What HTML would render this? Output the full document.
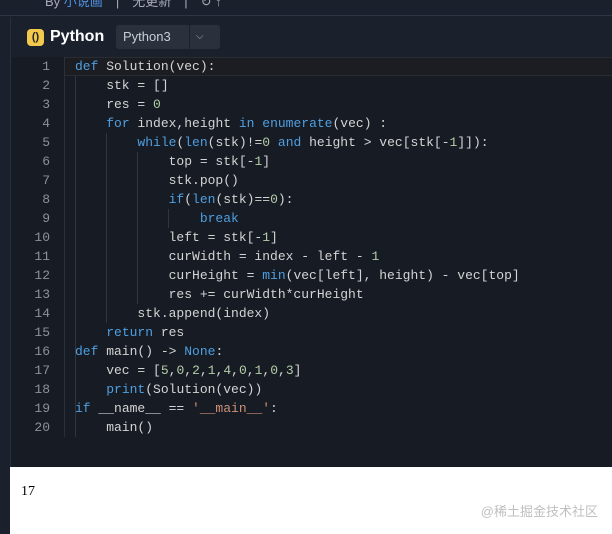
<!DOCTYPE html>
<html><head><meta charset="utf-8"><style>
*{margin:0;padding:0;box-sizing:border-box}
body{width:612px;height:534px;background:#1b212c;position:relative;overflow:hidden;font-family:"Liberation Sans","Noto Sans CJK SC",sans-serif}
.top{position:absolute;left:0;top:0;width:612px;height:16px;border-bottom:1px solid #2e3542}
.top span{position:absolute;top:-9px;font-size:13px;color:#aab}
.hdr{position:absolute;left:10px;top:17px;width:602px;height:40px;border-left:1px solid #2a303b}
.logo{position:absolute;left:16px;top:12px;width:17px;height:17px;background:#f2c94c;border-radius:4px;color:#222;font-size:11px;font-weight:bold;text-align:center;line-height:17px}
.title{position:absolute;left:39px;top:11px;color:#fff;font-weight:bold;font-size:16px}
.sel{position:absolute;left:105px;top:8px;width:104px;height:24px;background:#2b313c;border-radius:3px;color:#c9ced6;font-size:13px;line-height:24px;padding-left:7px}
.sel i{position:absolute;left:73px;top:0;width:1px;height:24px;background:#1b212c}
.code{position:absolute;left:10px;top:57px;width:602px;height:410px;background:#161b24;border-left:1px solid #2a303b}
.cur{position:absolute;left:54px;top:0;width:548px;height:19px;background:#1b1d22;border-top:1px solid #2a2c30;border-bottom:1px solid #2a2c30}
.gut{position:absolute;left:53px;top:0;width:1px;height:380px;background:#2a303b}
.ln{position:absolute;left:0;width:39px;text-align:right;color:#8b929c;font:13px/19px "Liberation Mono",monospace}
.l{position:absolute;left:64px;white-space:pre;color:#d4d4d4;font:13px/19px "Liberation Mono",monospace}
.k{color:#4f9fe0}.n{color:#b5cea8}.s{color:#ce9178}
.g{position:absolute;width:1px;background:#2f3541}
.out{position:absolute;left:10px;top:467px;width:602px;height:67px;background:#fff}
.out .r{position:absolute;left:11px;top:17px;font:14px "Liberation Serif",serif;color:#000}
.wm{position:absolute;right:14px;top:34px;font-size:13px;color:#bfbfbf}
</style></head><body>
<div class="top"><span style="left:45px">By <span style="position:static;color:#4f8fe0">小说画</span>　|　无更新　|　↻ ↑</span></div>
<div class="hdr"><div class="logo">()</div><div class="title">Python</div><div class="sel">Python3<i></i><span style="position:absolute;left:80px;top:0;color:#aab;font-size:10px">⌵</span></div></div>
<div class="code">
<div class="cur"></div><div class="gut"></div>
<div class="g" style="left:64px;top:19px;height:361px"></div>
<div class="g" style="left:95px;top:76px;height:190px"></div>
<div class="g" style="left:126px;top:95px;height:152px"></div>
<div class="g" style="left:157px;top:152px;height:19px"></div>
<div class="ln" style="top:0">1</div><div class="ln" style="top:19px">2</div><div class="ln" style="top:38px">3</div><div class="ln" style="top:57px">4</div><div class="ln" style="top:76px">5</div><div class="ln" style="top:95px">6</div><div class="ln" style="top:114px">7</div><div class="ln" style="top:133px">8</div><div class="ln" style="top:152px">9</div><div class="ln" style="top:171px">10</div><div class="ln" style="top:190px">11</div><div class="ln" style="top:209px">12</div><div class="ln" style="top:228px">13</div><div class="ln" style="top:247px">14</div><div class="ln" style="top:266px">15</div><div class="ln" style="top:285px">16</div><div class="ln" style="top:304px">17</div><div class="ln" style="top:323px">18</div><div class="ln" style="top:342px">19</div><div class="ln" style="top:361px">20</div>
<div class="l" style="top:0"><span class="k">def</span> Solution(vec):</div>
<div class="l" style="top:19px">    stk = []</div>
<div class="l" style="top:38px">    res = <span class="n">0</span></div>
<div class="l" style="top:57px">    <span class="k">for</span> index,height <span class="k">in</span> <span class="k">enumerate</span>(vec) :</div>
<div class="l" style="top:76px">        <span class="k">while</span>(<span class="k">len</span>(stk)!=<span class="n">0</span> <span class="k">and</span> height &gt; vec[stk[-<span class="n">1</span>]]):</div>
<div class="l" style="top:95px">            top = stk[-<span class="n">1</span>]</div>
<div class="l" style="top:114px">            stk.pop()</div>
<div class="l" style="top:133px">            <span class="k">if</span>(<span class="k">len</span>(stk)==<span class="n">0</span>):</div>
<div class="l" style="top:152px">                <span class="k">break</span></div>
<div class="l" style="top:171px">            left = stk[-<span class="n">1</span>]</div>
<div class="l" style="top:190px">            curWidth = index - left - <span class="n">1</span></div>
<div class="l" style="top:209px">            curHeight = <span class="k">min</span>(vec[left], height) - vec[top]</div>
<div class="l" style="top:228px">            res += curWidth*curHeight</div>
<div class="l" style="top:247px">        stk.append(index)</div>
<div class="l" style="top:266px">    <span class="k">return</span> res</div>
<div class="l" style="top:285px"><span class="k">def</span> main() -&gt; <span class="k">None</span>:</div>
<div class="l" style="top:304px">    vec = [<span class="n">5</span>,<span class="n">0</span>,<span class="n">2</span>,<span class="n">1</span>,<span class="n">4</span>,<span class="n">0</span>,<span class="n">1</span>,<span class="n">0</span>,<span class="n">3</span>]</div>
<div class="l" style="top:323px">    <span class="k">print</span>(Solution(vec))</div>
<div class="l" style="top:342px"><span class="k">if</span> __name__ == <span class="s">'__main__'</span>:</div>
<div class="l" style="top:361px">    main()</div>
</div>
<div class="out"><div class="r">17</div><div class="wm">@稀土掘金技术社区</div></div>
</body></html>
